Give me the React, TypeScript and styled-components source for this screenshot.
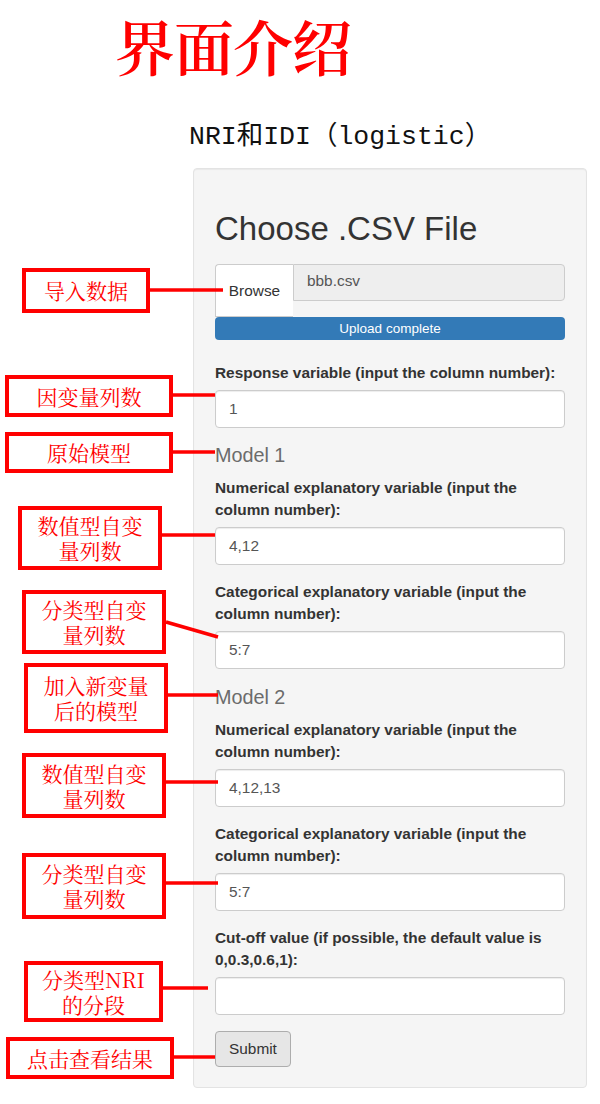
import { Fragment } from "react";
import styled, { createGlobalStyle } from "styled-components";

const GlobalStyle = createGlobalStyle`
  html, body {
    margin: 0;
    padding: 0;
    background: #ffffff;
  }
  * {
    box-sizing: border-box;
  }
`;

const callouts = [
  { x: 22, y: 268, w: 128, h: 45, lines: ["导入数据"], leader: [150, 290, 223, 290] },
  { x: 5, y: 375, w: 168, h: 42, lines: ["因变量列数"], leader: [173, 395, 215, 395] },
  { x: 5, y: 432, w: 168, h: 41, lines: ["原始模型"], leader: [173, 452, 215, 452] },
  { x: 18, y: 506, w: 144, h: 64, lines: ["数值型自变", "量列数"], leader: [162, 535, 215, 535] },
  { x: 22, y: 590, w: 144, h: 64, lines: ["分类型自变", "量列数"], leader: [166, 622, 218, 637] },
  { x: 24, y: 663, w: 144, h: 70, lines: ["加入新变量", "后的模型"], leader: [168, 695, 218, 695] },
  { x: 22, y: 753, w: 144, h: 65, lines: ["数值型自变", "量列数"], leader: [166, 782, 218, 782] },
  { x: 22, y: 853, w: 144, h: 66, lines: ["分类型自变", "量列数"], leader: [166, 883, 218, 883] },
  { x: 24, y: 961, w: 139, h: 61, lines: ["分类型NRI", "的分段"], leader: [163, 988, 208, 988] },
  { x: 6, y: 1037, w: 168, h: 42, lines: ["点击查看结果"], leader: [174, 1057, 215, 1057] },
];

const App = () => {
  return (
    <Page>
      <GlobalStyle />
      <Title>界面介绍</Title>
      <Subtitle>NRI和IDI（logistic）</Subtitle>

      <Well>
        <FileHeading>Choose .CSV File</FileHeading>
        <FileGroup>
          <BrowseButton>Browse</BrowseButton>
          <FileName>bbb.csv</FileName>
        </FileGroup>
        <Progress>Upload complete</Progress>

        <FormGroup $first>
          <Label>Response variable (input the column number):</Label>
          <TextInput defaultValue="1" />
        </FormGroup>

        <ModelHeading>Model 1</ModelHeading>
        <FormGroup>
          <Label>Numerical explanatory variable (input the column number):</Label>
          <TextInput defaultValue="4,12" />
        </FormGroup>
        <FormGroup>
          <Label>Categorical explanatory variable (input the column number):</Label>
          <TextInput defaultValue="5:7" />
        </FormGroup>

        <ModelHeading>Model 2</ModelHeading>
        <FormGroup>
          <Label>Numerical explanatory variable (input the column number):</Label>
          <TextInput defaultValue="4,12,13" />
        </FormGroup>
        <FormGroup>
          <Label>Categorical explanatory variable (input the column number):</Label>
          <TextInput defaultValue="5:7" />
        </FormGroup>
        <FormGroup>
          <Label>Cut-off value (if possible, the default value is 0,0.3,0.6,1):</Label>
          <TextInput defaultValue="" />
        </FormGroup>

        <SubmitButton>Submit</SubmitButton>
      </Well>

      <Leaders width="600" height="1104" viewBox="0 0 600 1104">
        {callouts.map((c, i) => (
          <line
            key={i}
            x1={c.leader[0]}
            y1={c.leader[1]}
            x2={c.leader[2]}
            y2={c.leader[3]}
            stroke="#ff0000"
            strokeWidth="3.5"
          />
        ))}
      </Leaders>

      {callouts.map((c, i) => (
        <Callout key={i} $x={c.x} $y={c.y} $w={c.w} $h={c.h}>
          <CalloutText>
            {c.lines.map((t, j) => (
              <Fragment key={j}>
                {j > 0 && <br />}
                {t}
              </Fragment>
            ))}
          </CalloutText>
        </Callout>
      ))}
    </Page>
  );
};

export default App;

const Page = styled.div`
  position: relative;
  width: 600px;
  height: 1104px;
  overflow: hidden;
  padding-top: 15px;
`;

const Title = styled.h1`
  margin: 0 0 0 115px;
  font-family: "Noto Serif CJK SC", "Noto Sans CJK SC", serif;
  font-weight: 600;
  font-size: 60px;
  line-height: 60px;
  color: #ff0000;
  letter-spacing: -1px;
`;

const Subtitle = styled.div`
  margin: 47px 0 0 189px;
  font-family: "Liberation Mono", "Noto Sans CJK SC", monospace;
  font-size: 26.5px;
  line-height: 30px;
  color: #111;
`;

const Well = styled.div`
  margin: 16px 0 0 193px;
  width: 394px;
  padding: 0 21px 20px;
  background: #f5f5f5;
  border: 1px solid #e3e3e3;
  border-radius: 4px;
  box-shadow: inset 0 1px 1px rgba(0, 0, 0, 0.05);
  font-family: "Liberation Sans", Arial, sans-serif;
  font-size: 15.4px;
  line-height: 22px;
  color: #333;
`;

const FileHeading = styled.h2`
  margin: 0;
  padding-top: 42px;
  font-size: 33px;
  font-weight: 400;
  line-height: 36px;
  color: #333;
`;

const FileGroup = styled.div`
  display: flex;
  align-items: flex-start;
  margin-top: 17px;
`;

const BrowseButton = styled.div`
  width: 78px;
  height: 53px;
  display: flex;
  align-items: center;
  justify-content: center;
  background: #ffffff;
  border: 1px solid #ccc;
  border-right: none;
  border-radius: 4px 0 0 0;
  color: #333;
`;

const FileName = styled.div`
  flex: 1;
  height: 37px;
  padding: 5px 13px;
  background: #eeeeee;
  border: 1px solid #ccc;
  border-radius: 0 4px 4px 0;
  color: #555;
`;

const Progress = styled.div`
  height: 23px;
  background: #337ab7;
  border-radius: 4px;
  color: #ffffff;
  font-size: 13.5px;
  line-height: 23px;
  text-align: center;
`;

const FormGroup = styled.div<{ $first?: boolean }>`
  margin-top: ${(p) => (p.$first ? "22px" : "0")};
  margin-bottom: 16.2px;
`;

const Label = styled.label`
  display: block;
  margin-bottom: 6px;
  font-weight: 700;
  color: #333;
`;

const TextInput = styled.input`
  display: block;
  width: 100%;
  height: 38px;
  padding: 6px 13px;
  font-family: "Liberation Sans", Arial, sans-serif;
  font-size: 15.4px;
  color: #555;
  background: #ffffff;
  border: 1px solid #ccc;
  border-radius: 4px;
  box-shadow: inset 0 1px 1px rgba(0, 0, 0, 0.075);
  outline: none;
`;

const ModelHeading = styled.h4`
  margin: 0 0 11px;
  font-size: 19.8px;
  font-weight: 400;
  line-height: 22px;
  color: #6b6b6b;
`;

const SubmitButton = styled.button`
  display: block;
  height: 36px;
  padding: 0 13px;
  font-family: "Liberation Sans", Arial, sans-serif;
  font-size: 15.4px;
  color: #333;
  background: #e6e6e6;
  border: 1px solid #adadad;
  border-radius: 4px;
`;

const Leaders = styled.svg`
  position: absolute;
  left: 0;
  top: 0;
  pointer-events: none;
`;

const Callout = styled.div<{ $x: number; $y: number; $w: number; $h: number }>`
  position: absolute;
  left: ${(p) => p.$x}px;
  top: ${(p) => p.$y}px;
  width: ${(p) => p.$w}px;
  height: ${(p) => p.$h}px;
  display: flex;
  align-items: center;
  justify-content: center;
  background: #ffffff;
  border: 4px solid #ff0000;
`;

const CalloutText = styled.div`
  font-family: "Noto Serif CJK SC", "Liberation Serif", "Noto Sans CJK SC", serif;
  font-size: 21px;
  line-height: 25px;
  color: #ff0000;
  text-align: center;
  white-space: nowrap;
`;
